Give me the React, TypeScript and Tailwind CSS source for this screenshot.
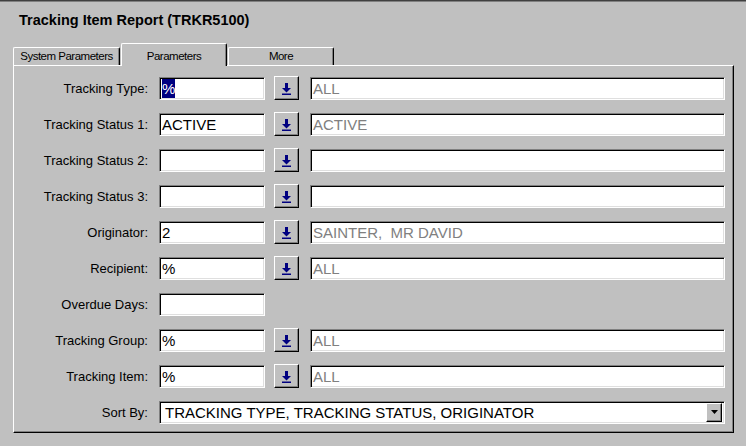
import React from "react";

type Row = {
  label: string;
  value: string;
  desc?: string;
  lookup?: boolean;
  selected?: boolean;
};

const rows: Row[] = [
  { label: "Tracking Type:", value: "%", desc: "ALL", lookup: true, selected: true },
  { label: "Tracking Status 1:", value: "ACTIVE", desc: "ACTIVE", lookup: true },
  { label: "Tracking Status 2:", value: "", desc: "", lookup: true },
  { label: "Tracking Status 3:", value: "", desc: "", lookup: true },
  { label: "Originator:", value: "2", desc: "SAINTER,  MR DAVID", lookup: true },
  { label: "Recipient:", value: "%", desc: "ALL", lookup: true },
  { label: "Overdue Days:", value: "" },
  { label: "Tracking Group:", value: "%", desc: "ALL", lookup: true },
  { label: "Tracking Item:", value: "%", desc: "ALL", lookup: true },
];

// sunken win95 field
const sunken =
  "border border-t-[#808080] border-l-[#808080] border-b-white border-r-white shadow-[inset_1px_1px_0_#000,inset_-1px_-1px_0_#dfdfdf] bg-white";

// raised win95 button
const raised =
  "border border-t-white border-l-white border-r-black border-b-black shadow-[inset_-1px_-1px_0_#808080] bg-[#c0c0c0]";

const LookupButton = () => (
  <button className={`ml-[9px] w-[25px] h-[24px] flex items-center justify-center ${raised}`}>
    <svg width="9" height="12" viewBox="0 0 9 12" className="mt-[1px]">
      <rect x="3" y="0" width="3" height="5" fill="#000080" />
      <polygon points="0,5 9,5 4.5,9.5" fill="#000080" />
      <rect x="0" y="10.5" width="9" height="1.5" fill="#000080" />
    </svg>
  </button>
);

const Tab = ({ label, active, className }: { label: string; active?: boolean; className?: string }) => (
  <div
    className={`relative flex justify-center text-[11.5px] tracking-[-0.5px] leading-[12px] text-black bg-[#c0c0c0] border-t border-l border-t-white border-l-white border-r border-r-black rounded-tl-[2px] rounded-tr-[2px] shadow-[inset_-1px_0_0_#808080] ${
      active ? "z-10 h-[23px] pt-[6px]" : "mt-[4px] h-[18px] pt-[2px]"
    } ${className ?? ""}`}
  >
    {label}
  </div>
);

export default function App() {
  return (
    <div className="w-[746px] h-[446px] bg-[#c0c0c0] font-['Liberation_Sans',Arial,sans-serif] shadow-[inset_0_1px_0_#404040,inset_0_2px_0_#808080] overflow-hidden">
      <div className="h-[43px] pt-[11px] pl-[19px] text-[14.5px] font-bold leading-[18px] text-black">
        Tracking Item Report (TRKR5100)
      </div>

      {/* tabs */}
      <div className="flex items-start h-[22px] ml-[13px]">
        <Tab label="System Parameters" className="w-[107px]" />
        <Tab label="Parameters" active className="ml-[1px] w-[106px]" />
        <Tab label="More" className="ml-[1px] w-[106px]" />
      </div>

      {/* panel */}
      <div className="ml-[13px] w-[721px] h-[368px] border border-t-white border-l-white border-r-black border-b-black shadow-[inset_-1px_-1px_0_#808080] pt-[10px]">
        <div className="flex flex-col gap-[12px]">
          {rows.map((r) => (
            <div key={r.label} className="flex items-center h-[24px]">
              <div className="w-[134px] text-right text-[13px] leading-none text-black">{r.label}</div>
              <div className={`ml-[11px] w-[106px] h-[23px] flex items-center pl-[2px] text-[15px] leading-none text-black ${sunken}`}>
                {r.selected ? (
                  <span className="inline-block bg-[#000080] text-white h-[19px] leading-[19px]">{r.value}</span>
                ) : (
                  <span className="whitespace-pre">{r.value}</span>
                )}
              </div>
              {r.lookup && (
                <>
                  <LookupButton />
                  <div className={`ml-[11px] w-[415px] h-[23px] flex items-center pl-[2px] text-[15px] leading-none text-[#808080] whitespace-pre ${sunken}`}>
                    {r.desc}
                  </div>
                </>
              )}
            </div>
          ))}

          <div className="flex items-center h-[24px]">
            <div className="w-[134px] text-right text-[13px] leading-none text-black">Sort By:</div>
            <div className={`ml-[11px] w-[566px] h-[23px] flex items-center justify-between pl-[5px] pr-[2px] text-[15px] leading-none text-black ${sunken}`}>
              <span>TRACKING TYPE, TRACKING STATUS, ORIGINATOR</span>
              <div className={`w-[16px] h-[19px] flex items-center justify-center ${raised}`}>
                <svg width="7" height="4" viewBox="0 0 7 4">
                  <polygon points="0,0 7,0 3.5,4" fill="#000" />
                </svg>
              </div>
            </div>
          </div>
        </div>
      </div>
    </div>
  );
}
